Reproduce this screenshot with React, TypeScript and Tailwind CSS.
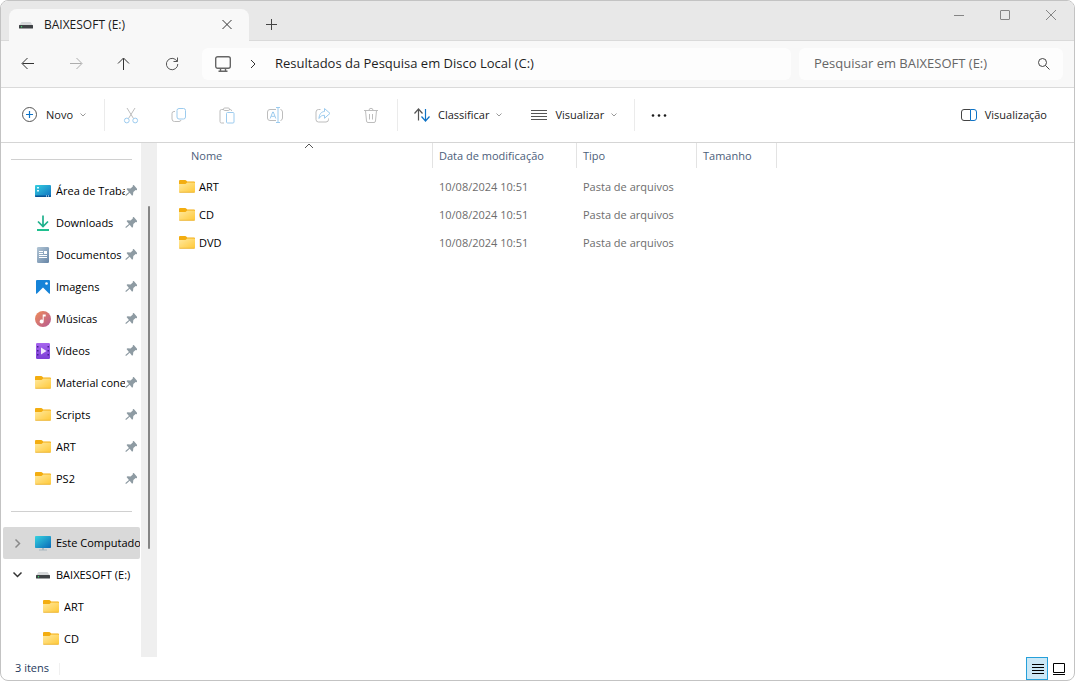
import type { ReactNode } from 'react';
import clsx from 'clsx';

type IconName = 'desktop' | 'download' | 'document' | 'image' | 'music' | 'video' | 'folder' | 'computer' | 'drive';

type NavItem = {
  label: string;
  icon: IconName;
  pinned?: boolean;
  selected?: boolean;
  expanded?: boolean;
  nested?: boolean;
};

const pinnedItems: NavItem[] = [
  { label: 'Área de Trabalho', icon: 'desktop', pinned: true },
  { label: 'Downloads', icon: 'download', pinned: true },
  { label: 'Documentos', icon: 'document', pinned: true },
  { label: 'Imagens', icon: 'image', pinned: true },
  { label: 'Músicas', icon: 'music', pinned: true },
  { label: 'Vídeos', icon: 'video', pinned: true },
  { label: 'Material conexão', icon: 'folder', pinned: true },
  { label: 'Scripts', icon: 'folder', pinned: true },
  { label: 'ART', icon: 'folder', pinned: true },
  { label: 'PS2', icon: 'folder', pinned: true },
];

const treeItems: NavItem[] = [
  { label: 'Este Computador', icon: 'computer', selected: true, expanded: false },
  { label: 'BAIXESOFT (E:)', icon: 'drive', expanded: true },
  { label: 'ART', icon: 'folder', nested: true },
  { label: 'CD', icon: 'folder', nested: true },
];

const files = [
  { name: 'ART', modified: '10/08/2024 10:51', type: 'Pasta de arquivos' },
  { name: 'CD', modified: '10/08/2024 10:51', type: 'Pasta de arquivos' },
  { name: 'DVD', modified: '10/08/2024 10:51', type: 'Pasta de arquivos' },
];

export default function App() {
  return (
    <div className="h-screen bg-white">
      <div className="flex h-full flex-col overflow-hidden rounded-lg border border-[#c3c3c3] bg-white font-['Open_Sans',sans-serif] text-[11px] text-black">
        <TitleBar />
        <AddressBar />
        <CommandBar />
        <div className="flex min-h-0 flex-1">
          <Sidebar />
          <FileList />
        </div>
        <StatusBar />
      </div>
    </div>
  );
}

function TitleBar() {
  return (
    <header className="flex h-10 shrink-0 items-end border-b border-[#dadada] bg-[#e8e8e8] pl-2">
      <div className="-mb-px flex h-8 w-60 items-center rounded-t-lg bg-[#f8f8f8] pr-[14px] pl-[9px]">
        <FileIcon name="drive" />
        <span className="ml-[10px] flex-1 text-xs font-medium text-[#1b1b1b]">BAIXESOFT (E:)</span>
        <button type="button" aria-label="Fechar guia" className="flex size-4 items-center justify-center">
          <Line d="M3.5 3l9 9M12.5 3l-9 9" className="text-[#333]" />
        </button>
      </div>
      <button type="button" aria-label="Nova guia" className="ml-[6px] flex size-8 items-center justify-center">
        <Line d="M8.500 3v11M3 8.500h11" className="text-[#444]" />
      </button>
      <div className="ml-auto flex h-full items-start">
        <button type="button" aria-label="Minimizar" className="flex h-7 w-[46px] items-center justify-center">
          <Line d="M3 8.500h10" className="text-[#858585]" />
        </button>
        <button type="button" aria-label="Maximizar" className="flex h-7 w-[46px] items-center justify-center">
          <Line d="M4 3.500h8q.5 0 .5.5v8q0 .5-.5.5h-8q-.5 0-.5-.5v-8q0-.5.5-.5z" className="text-[#858585]" />
        </button>
        <button type="button" aria-label="Fechar" className="flex h-7 w-[46px] items-center justify-center">
          <Line d="M3 3l10 10M13 3l-10 10" className="text-[#858585]" />
        </button>
      </div>
    </header>
  );
}

function AddressBar() {
  return (
    <div className="flex h-[47px] shrink-0 items-center border-b border-[#dadada] bg-[#f8f8f8] px-[11px]">
      <nav className="mr-[14px] flex gap-4">
        <NavButton label="Voltar" d="M14 7.500H2.500M7.500 2l-5.500 5.500 5.500 5.500" className="text-[#333]" />
        <NavButton label="Avançar" d="M2 7.500h11.500M8.500 2l5.500 5.500-5.500 5.500" className="text-[#adadad]" />
        <NavButton label="Acima" d="M7.500 14V2.500M2 7.500l5.500-5.500 5.500 5.500" className="text-[#333]" />
        <NavButton label="Atualizar" d="M13.200 5.500a5.700 5.700 0 1 0 .600 2.500M13.500 1.500v4h-4" className="text-[#555]" />
      </nav>
      <div className="flex h-8 flex-1 items-center rounded-md bg-[#fdfdfd] pl-3">
        <svg viewBox="0 0 18 18" className="size-[18px] text-[#666]" fill="none" stroke="currentColor" strokeWidth="1.4">
          <rect x="1.700" y="1.700" width="14.600" height="11.600" rx="2" />
          <path d="M6.500 13.500v2.500M11.500 13.500v2.500M4.500 16.300h9" />
        </svg>
        <Line d="M6 4l4 4-4 4" className="ml-[13px] text-[#333]" />
        <span className="ml-[14px] text-[13px] text-[#1f1f1f]">Resultados da Pesquisa em Disco Local (C:)</span>
      </div>
      <label className="ml-2 flex h-8 w-66 items-center rounded-md bg-[#fdfdfd] pr-[11px] pl-[15px]">
        <input
          type="search"
          aria-label="Pesquisar"
          placeholder="Pesquisar em BAIXESOFT (E:)"
          className="min-w-0 flex-1 bg-transparent text-[13px] outline-none placeholder:text-[#666]"
        />
        <Line d="M10.500 6.500a4 4 0 1 1-8 0a4 4 0 1 1 8 0M9.500 9.500l4 4" className="text-[#444]" />
      </label>
    </div>
  );
}

function CommandBar() {
  return (
    <div className="flex h-[55px] shrink-0 items-center border-b border-[#d5d5d5] pr-[18px] pl-3 text-[#222]">
      <button type="button" className="flex h-8 w-[84px] items-center pl-2">
        <svg viewBox="0 0 16 16" className="size-4" fill="none">
          <circle cx="8.500" cy="7.500" r="7" stroke="#555" />
          <path d="M8.500 4v7M5 7.500h7" stroke="#0f73c6" strokeWidth="1.200" />
        </svg>
        <span className="ml-[9px]">Novo</span>
        <SmallChevron />
      </button>
      <Divider className="mr-[10px] ml-[7px]" />
      <div className="flex gap-4">
        <ToolButton label="Recortar">
          <path d="M4 1l6.500 10.500M12 1L5.500 11.500" stroke="#bdbdbd" />
          <circle cx="3.800" cy="13.500" r="2.400" stroke="#9ccbee" />
          <circle cx="12.200" cy="13.500" r="2.400" stroke="#9ccbee" />
        </ToolButton>
        <ToolButton label="Copiar">
          <path d="M4 4.500H3A2 2 0 0 0 1 6.500V12a2.500 2.500 0 0 0 2.500 2.500H8A2 2 0 0 0 10 13" stroke="#bdbdbd" />
          <rect x="6" y="1.500" width="8.500" height="10.500" rx="2" stroke="#9ccbee" />
        </ToolButton>
        <ToolButton label="Colar">
          <path d="M5 2.500H2.500Q1 2.500 1 4v10.500Q1 16 2.500 16H5M10 2.500H11.500Q12.500 2.500 12.500 4" stroke="#bdbdbd" />
          <rect x="4.500" y="1" width="6" height="2.500" rx="1.200" stroke="#bdbdbd" />
          <rect x="7.500" y="5.500" width="7.500" height="10.500" rx="1" stroke="#9ccbee" />
        </ToolButton>
        <ToolButton label="Renomear">
          <path d="M9 2.500H3a2.500 2.500 0 0 0-2.500 2.500v6A2.500 2.500 0 0 0 3 13.500h6M13.500 2.500a2.500 2.500 0 0 1 2 2.500v6a2.500 2.500 0 0 1-2 2.500" stroke="#bdbdbd" />
          <path d="M3.200 11.500L5.700 5h.600l2.500 6.500M4.200 9.300h3.600M11 .500v15M9 .500h4M9 15.500h4" stroke="#9ccbee" />
        </ToolButton>
        <ToolButton label="Compartilhar">
          <path d="M5.500 2.500H3.500a2.500 2.500 0 0 0-2.500 2.500v7.500A2.500 2.500 0 0 0 3.500 15H11a2.500 2.500 0 0 0 2.500-2.500v-1" stroke="#bdbdbd" />
          <path d="M9.500 1.500v3C6 4.700 4.200 7.500 4 11.500c1.500-2.500 3-3.200 5.500-3.200v3L15 6.400z" stroke="#9ccbee" strokeLinejoin="round" />
        </ToolButton>
        <ToolButton label="Excluir">
          <path d="M1 3.500h14M6 3.300a2 2 0 0 1 4 0M2.500 3.500l1 10.500q.1 1.500 1.500 1.500h6q1.400 0 1.500-1.500l1-10.500M6.500 7v5.500M9.500 7v5.500" stroke="#bdbdbd" />
        </ToolButton>
      </div>
      <Divider className="mx-[10px]" />
      <button type="button" className="flex h-8 items-center pl-[6px]">
        <svg viewBox="0 0 16 16" className="size-4" fill="none" strokeWidth="1.200">
          <path d="M4.500 13.500V2.500M.500 6.500l4-4.500 4 4.500" stroke="#555" />
          <path d="M11.500 2v11.500M7.500 9.500l4 4.500 4-4.500" stroke="#0f73c6" />
        </svg>
        <span className="ml-2">Classificar</span>
        <SmallChevron />
      </button>
      <button type="button" className="ml-5 flex h-8 items-center pl-2">
        <Line d="M0 3.500h16M0 6.500h16M0 9.500h16M0 12.500h16" className="text-[#555]" />
        <span className="ml-2">Visualizar</span>
        <SmallChevron />
      </button>
      <Divider className="mr-2 ml-4" />
      <button type="button" aria-label="Ver mais" className="flex size-8 items-center justify-center">
        <svg viewBox="0 0 16 16" className="size-4" fill="#1b1b1b">
          <circle cx="2" cy="8.500" r="1.300" />
          <circle cx="8" cy="8.500" r="1.300" />
          <circle cx="14" cy="8.500" r="1.300" />
        </svg>
      </button>
      <button type="button" className="ml-auto flex h-8 items-center gap-2 pr-[9px]">
        <svg viewBox="0 0 16 16" className="size-4" fill="none">
          <path d="M9.500 2.500H3A2.500 2.500 0 0 0 .500 5v6A2.500 2.500 0 0 0 3 13.500h6.500" stroke="#444" />
          <path d="M9.500 2.500H13A2.500 2.500 0 0 1 15.500 5v6a2.500 2.500 0 0 1-2.500 2.500H9.500z" stroke="#0f73c6" />
        </svg>
        Visualização
      </button>
    </div>
  );
}

function Sidebar() {
  return (
    <aside className="flex shrink-0">
      <div className="w-35 overflow-hidden">
        <NavDivider />
        <ul>
          {pinnedItems.map((item) => (
            <SidebarRow key={item.label} item={item} />
          ))}
        </ul>
        <NavDivider />
        <ul>
          {treeItems.map((item) => (
            <SidebarRow key={item.label} item={item} />
          ))}
        </ul>
      </div>
      <div className="flex w-4 justify-center bg-[#efefef] pt-[63px]">
        <div className="h-[76%] w-0.5 rounded-full bg-[#858585]" />
      </div>
    </aside>
  );
}

function SidebarRow({ item }: { item: NavItem }) {
  return (
    <li>
      <a
        href="#"
        className={clsx(
          'mr-px ml-0.5 flex h-8 items-center rounded-xs',
          item.selected && 'bg-[#d9d9d9]',
          item.nested && 'pl-2',
          item.pinned && 'pr-[3px]',
        )}
      >
        <span className="flex w-8 shrink-0 pl-[6px]">
          {item.expanded === false && (
            <svg viewBox="0 0 16 16" className="size-4 text-[#8a8a8a]" fill="none" stroke="currentColor" strokeWidth="1.500">
              <path d="M6.500 4.500l4 4-4 4" />
            </svg>
          )}
          {item.expanded && (
            <svg viewBox="0 0 16 16" className="size-4 text-[#333]" fill="none" stroke="currentColor" strokeWidth="1.500">
              <path d="M4.500 5.500l4 4 4-4" />
            </svg>
          )}
        </span>
        <FileIcon name={item.icon} />
        <span className="ml-[5px] min-w-0 flex-1 overflow-hidden whitespace-nowrap">{item.label}</span>
        {item.pinned && <Pin />}
      </a>
    </li>
  );
}

function FileList() {
  return (
    <main className="ml-0.5 min-w-0 flex-1">
      <table className="w-full table-fixed text-left">
        <colgroup>
          <col className="w-[274px]" />
          <col className="w-36" />
          <col className="w-30" />
          <col className="w-20" />
          <col />
        </colgroup>
        <thead className="text-[#4c607a]">
          <tr>
            <HeaderCell className="relative pl-8">
              Nome
              <svg viewBox="0 0 10 6" className="absolute top-0 left-[145px] h-1.5 w-2.5" fill="none" stroke="#555">
                <path d="M1 5l4-4 4 4" />
              </svg>
            </HeaderCell>
            <HeaderCell className="pl-[6px]">Data de modificação</HeaderCell>
            <HeaderCell className="pl-[6px]">Tipo</HeaderCell>
            <HeaderCell className="pl-[6px]">Tamanho</HeaderCell>
            <td />
          </tr>
        </thead>
        <tbody className="text-[#6d6d6d]">
          {files.map((f) => (
            <tr key={f.name} className="h-7">
              <td className="p-0 pl-5">
                <div className="flex items-center gap-1 text-black">
                  <FileIcon name="folder" />
                  {f.name}
                </div>
              </td>
              <td className="p-0 pl-[6px]">{f.modified}</td>
              <td className="p-0 pl-[6px]">{f.type}</td>
              <td />
              <td />
            </tr>
          ))}
        </tbody>
      </table>
    </main>
  );
}

function StatusBar() {
  return (
    <footer className="flex h-[23px] shrink-0 items-center justify-between pr-1 pl-[14px] text-[#1e395b]">
      <div className="flex items-center gap-[10px]">
        <span>3 itens</span>
        <span className="h-3 w-px bg-[#f0f0f0]" />
      </div>
      <div className="flex h-full">
        <button
          type="button"
          aria-label="Detalhes"
          className="flex w-[22px] items-center justify-center border border-[#26a0da] bg-[#cce8f6]"
        >
          <Line d="M3 3.500h12M3 6.500h12M3 9.500h12M3 12.500h12" className="text-black" />
        </button>
        <button type="button" aria-label="Ícones grandes" className="flex w-[22px] items-center justify-center">
          <Line d="M2.500 2.500h11v9h-11zM2 13.500h12" className="text-black" />
        </button>
      </div>
    </footer>
  );
}

function HeaderCell({ className, children }: { className?: string; children: ReactNode }) {
  return (
    <th className="h-[30px] p-0 align-top font-normal">
      <div className={clsx('flex h-[25px] items-center border-r border-[#e3e3e3] pt-px', className)}>{children}</div>
    </th>
  );
}

function Line({ d, className }: { d: string; className?: string }) {
  return (
    <svg viewBox="0 0 16 16" className={clsx('size-4 shrink-0', className)} fill="none" stroke="currentColor">
      <path d={d} />
    </svg>
  );
}

function NavButton({ label, d, className }: { label: string; d: string; className: string }) {
  return (
    <button type="button" aria-label={label} className="flex size-8 items-center justify-center">
      <Line d={d} className={className} />
    </button>
  );
}

function ToolButton({ label, children }: { label: string; children: ReactNode }) {
  return (
    <button type="button" aria-label={label} disabled className="flex size-8 items-center justify-center">
      <svg viewBox="0 0 16 17" className="h-[17px] w-4" fill="none">
        {children}
      </svg>
    </button>
  );
}

function SmallChevron() {
  return (
    <svg viewBox="0 0 8 8" className="ml-[6px] size-2" fill="none" stroke="#999">
      <path d="M1.500 2.500L4 5l2.500-2.500" />
    </svg>
  );
}

function Divider({ className }: { className?: string }) {
  return <div className={clsx('h-8 w-px bg-[#ebebeb]', className)} />;
}

function NavDivider() {
  return (
    <div className="h-8 pt-4">
      <div className="mr-[9px] ml-[10px] border-t border-[#d0d0d0]" />
    </div>
  );
}

// drawn upright, then tilted as a whole
function Pin() {
  return (
    <svg viewBox="0 0 12 12" className="size-3 shrink-0" fill="#8e9ba3">
      <g transform="rotate(50 6 6)">
        <path d="M3 0h6v1.200l-.800.600v3L10.300 7v1.200H6.600V12.500L6 13.300l-.600-.800V8.200H1.700V7l2.100-2.200v-3L3 1.200z" />
      </g>
    </svg>
  );
}

function FileIcon({ name }: { name: IconName }) {
  return (
    <svg viewBox="0 0 16 16" className="size-4 shrink-0" fill="none">
      {icons[name]}
    </svg>
  );
}

const icons: Record<IconName, ReactNode> = {
  folder: (
    <>
      <defs>
        <linearGradient id="folder" x1="0" y1="0" x2="1" y2="1">
          <stop stopColor="#ffe9a0" />
          <stop offset="1" stopColor="#ffc938" />
        </linearGradient>
      </defs>
      <path d="M0 2Q0 1 1 1h5.300q.500 0 .900.400L8.200 2.500H15q1 0 1 1V8H0z" fill="#f3ad10" />
      <path d="M0 5h6.500L8.200 3.500h7q.800 0 .800.800V12.500q0 1-1 1H1q-1 0-1-1z" fill="url(#folder)" />
      <path d="M.300 13.300h15.400" stroke="#eab030" strokeWidth=".800" />
    </>
  ),
  desktop: (
    <>
      <defs>
        <linearGradient id="desktop" x1="0" y1="0" x2="1" y2="1">
          <stop stopColor="#35cfe0" />
          <stop offset="1" stopColor="#0f6fc0" />
        </linearGradient>
      </defs>
      <rect y="2" width="16" height="12" rx="1" fill="url(#desktop)" />
      <path d="M2 4h2v1.500H2zM2 7h2v1.500H2z" fill="#d8fbff" />
      <path d="M0 12.500h16V13q0 1-1 1H1q-1 0-1-1z" fill="#075395" />
      <path d="M11 12.500h1v1h-1zM13 12.500h1v1h-1z" fill="#fff" />
    </>
  ),
  download: (
    <>
      <path d="M8 .500v11M3 6.500l5 5 5-5" stroke="#1fb08c" strokeWidth="1.700" />
      <path d="M2 15h12" stroke="#1fc08f" strokeWidth="1.800" />
    </>
  ),
  document: (
    <>
      <defs>
        <linearGradient id="document" x1="0" y1="0" x2="1" y2="1">
          <stop stopColor="#b3c6d6" />
          <stop offset="1" stopColor="#6685a6" />
        </linearGradient>
      </defs>
      <rect x="2" y="0" width="12" height="16" rx="1.200" fill="url(#document)" />
      <path d="M4 4.500h4M4 6.500h4M4 8.500h8M4 10.500h8" stroke="#fff" />
      <path d="M9 4h3v3H9z" fill="#fff" />
    </>
  ),
  image: (
    <>
      <rect x="1" y="1" width="14" height="14" rx="1" fill="#1583d8" />
      <path d="M1.500 15L8 8.500l6.500 6.500z" fill="#fff" />
      <circle cx="11.500" cy="4.500" r="1.300" fill="#fff" />
    </>
  ),
  music: (
    <>
      <defs>
        <linearGradient id="music" x1="0" y1="0" x2="1" y2="1">
          <stop stopColor="#f08d58" />
          <stop offset="1" stopColor="#b55a93" />
        </linearGradient>
      </defs>
      <circle cx="8" cy="8" r="8" fill="url(#music)" />
      <path d="M7.700 3.500h3v2H8.700v5a2 2 0 1 1-1-1.700z" fill="#fff" />
    </>
  ),
  video: (
    <>
      <defs>
        <linearGradient id="video" x1="0" y1="0" x2="0" y2="1">
          <stop stopColor="#a765ee" />
          <stop offset="1" stopColor="#7d3fd6" />
        </linearGradient>
      </defs>
      <rect x="1" y="0" width="14" height="16" rx="1.200" fill="url(#video)" />
      <path d="M2 3h1.500v1.500H2zM2 7h1.500v1.500H2zM2 11h1.500v1.500H2zM12.500 3H14v1.500h-1.500zM12.500 7H14v1.500h-1.500zM12.500 11H14v1.500h-1.500z" fill="#45208f" />
      <path d="M6 4.500v7L11.500 8z" fill="#f3eafd" />
    </>
  ),
  computer: (
    <>
      <defs>
        <linearGradient id="computer" x1="0" y1="0" x2="1" y2="1">
          <stop stopColor="#36d3e0" />
          <stop offset="1" stopColor="#0a69b8" />
        </linearGradient>
      </defs>
      <path d="M7 12h2v2.500H7zM4 14.500h8v1H4z" fill="#a9b8c0" />
      <rect y="1" width="16" height="12" rx=".800" fill="url(#computer)" />
    </>
  ),
  drive: (
    <>
      <path d="M3.500 5h9L15 8.500H1z" fill="#d5d7d9" />
      <rect x="1" y="8" width="14" height="3.500" rx=".500" fill="#3e4144" />
      <circle cx="3.500" cy="9.700" r=".700" fill="#3fe070" />
    </>
  ),
};
